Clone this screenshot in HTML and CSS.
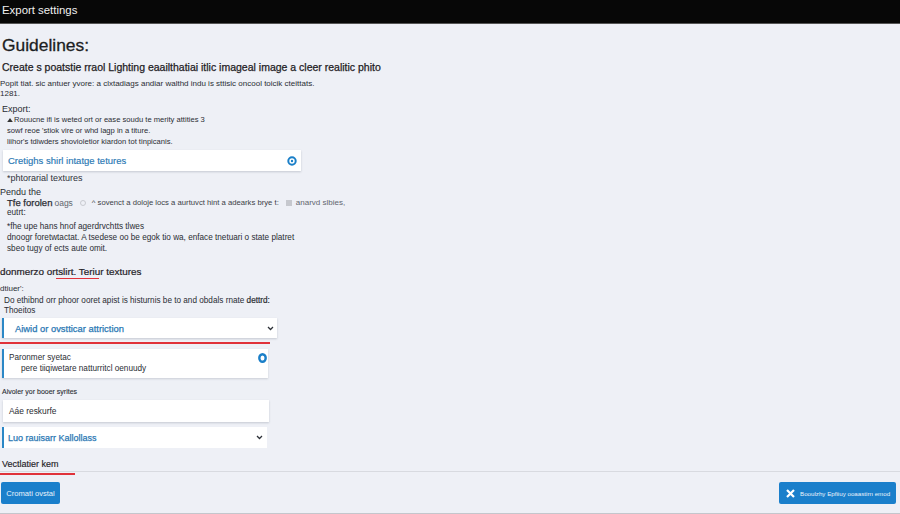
FILE: index.html
```html
<!DOCTYPE html>
<html lang="en">
<head>
<meta charset="utf-8">
<title>Export settings</title>
<link rel="stylesheet" href="styles.css">
</head>
<body>
<header class="topbar">Export settings</header>
<main class="content">
  <h1 class="title">Guidelines:</h1>
  <h2 class="subtitle">Create s poatstie rraol Lighting eaailthatiai itlic imageal image a cleer realitic phito</h2>
  <p class="line intro">Popit tiat. sic antuer yvore: a clxtadiags andiar walthd indu is sttisic oncool toicik cteittats.</p>
  <p class="line intro">1281.</p>
  <p class="line label-a">Export:</p>
  <ul class="bullets">
    <li><svg class="tri" width="6" height="4" viewBox="0 0 7 5"><path d="M0 5 3.5 0 7 5z"/></svg>Rouucne ifi is weted ort or ease soudu te merity attities 3</li>
    <li>sowf reoe 'stiok vire or whd lagp in a titure.</li>
    <li>liihor's tdiwders shovioletior kiardon tot tinpicanis.</li>
  </ul>
  <div class="field field-a">
    <span class="blue-text">Cretighs shirl intatge tetures</span>
    <svg width="10" height="10" viewBox="0 0 10 10"><circle cx="5" cy="5" r="3.7" fill="none" stroke="#1a7fc8" stroke-width="2"/><circle cx="5" cy="5" r="1.2" fill="#1a7fc8"/></svg>
  </div>
  <p class="line photo">*phtorarial textures</p>
  <p class="line pendu">Pendu the</p>
  <p class="line row-the"><b>Tfe forolen</b> <span class="muted">oags</span><i class="radio"></i><span class="tight">^ sovenct a doloje locs a aurtuvct hint a adearks brye t:</span><i class="check"></i><span class="muted narrow">anarvd slbies,</span></p>
  <p class="line indent">eutrt:</p>
  <p class="line indent gap-a">*fhe upe hans hnof agerdrvchtts tlwes</p>
  <p class="line indent">dnoogr foretwtactat. A tsedese oo be egok tio wa, enface tnetuari o state platret</p>
  <p class="line indent">sbeo tugy of ects aute omit.</p>
  <h3 class="section">donmerzo ortslirt. <span class="under">Teriur</span> textures</h3>
  <p class="line after">dtiuer':</p>
  <ul class="bullets compact">
    <li>Do ethibnd orr phoor ooret apist is histurnis be to and obdals rnate <b>dettrd:</b></li>
    <li>Thoeitos</li>
  </ul>
  <div class="field field-b accent">
    <span class="blue-text strong">Aiwid or ovstticar attriction</span>
    <svg class="chev" width="7" height="5" viewBox="0 0 8 6"><path d="M1 1.2 4 4.2 7 1.2"/></svg>
  </div>
  <div class="redline"></div>
  <div class="card accent">
    <div>
      <p class="card-top">Paronmer syetac</p>
      <p class="card-bottom">pere tiiqiwetare natturritcl oenuudy</p>
    </div>
    <svg width="9" height="10" viewBox="0 0 9 10"><ellipse cx="4.5" cy="5" rx="3.2" ry="3.8" fill="none" stroke="#1a7fc8" stroke-width="2.4"/></svg>
  </div>
  <p class="line small-label">Aivoler yor booer syrites</p>
  <div class="field field-c">Aáe reskurfe</div>
  <div class="field field-d accent">
    <span class="blue-text strong luo">Luo rauisarr Kallollass</span>
    <svg class="chev" width="7" height="5" viewBox="0 0 8 6"><path d="M1 1.2 4 4.2 7 1.2"/></svg>
  </div>
</main>
<footer class="footer">
  <span class="footer-label">Vectlatier kem</span>
  <button class="btn btn-left" type="button">Cromati ovstal</button>
  <button class="btn btn-right" type="button">
    <svg width="9" height="9" viewBox="0 0 9 9"><path d="M1 1 8 8M8 1 1 8" stroke="#fff" stroke-width="2.2"/></svg>
    <span>Booulzhy Epfiiuy ooaastirn emod</span>
  </button>
</footer>
</body>
</html>
```
FILE: styles.css
```css
* { box-sizing: border-box; }
html, body { margin: 0; padding: 0; }
body {
  width: 900px;
  height: 514px;
  overflow: hidden;
  position: relative;
  background: #eef0f6;
  color: #2a2d33;
  font-family: "Liberation Sans", Arial, sans-serif;
  font-size: 9px;
}
.topbar {
  height: 24px;
  background: #070707;
  color: #f0f0f0;
  font-size: 11.4px;
  line-height: 21px;
  padding-left: 2px;
  border-bottom: 1px solid #555;
}
.content { padding: 0 0 0 2px; }
p, h1, h2, h3, ul { margin: 0; padding: 0; }
.title {
  font-size: 17.4px;
  font-weight: 400;
  line-height: 24px;
  margin-top: 9px;
  color: #1c1e22;
  -webkit-text-stroke: 0.3px #1c1e22;
}
.subtitle {
  font-size: 10.5px;
  font-weight: 400;
  line-height: 14px;
  margin-top: 3px;
  color: #1e2024;
  -webkit-text-stroke: 0.25px #1e2024;
  white-space: nowrap;
}
.line { line-height: 10px; white-space: nowrap; }
.intro { margin-left: -2px; font-size: 8px; }
.intro:first-of-type { margin-top: 5px; }
.label-a { font-size: 9px; margin-top: 5px; }
.bullets { list-style: none; margin: 0; }
.bullets li { font-size: 7.6px; line-height: 11px; padding-left: 5px; white-space: nowrap; }
.tri { fill: #333; margin-right: 1px; }
.field {
  display: flex;
  align-items: center;
  justify-content: space-between;
  background: #fff;
  box-shadow: 0 1px 2px rgba(120, 125, 140, .35);
}
.field-a { width: 298px; height: 21px; margin-top: 3px; margin-left: 1px; padding: 0 4px 0 5px; }
.blue-text { color: #2a78b4; font-size: 9.5px; -webkit-text-stroke: 0.15px #2a78b4; }
.strong { font-size: 9.4px; -webkit-text-stroke: 0.25px #2a78b4; }
.luo { font-size: 9px; }
.photo { margin-top: 2px; margin-left: 5px; font-size: 9px; color: #30333a; }
.pendu { margin-top: 4px; font-size: 9px; margin-left: -2px; }
.row-the { display: flex; align-items: center; margin-top: 1px; padding-left: 5px; font-size: 9px; }
.row-the b { font-weight: 400; -webkit-text-stroke: 0.25px #2a2d33; font-size: 9.5px; margin-right: 2px; }
.muted { color: #62666e; font-size: 8.5px; }
.narrow { font-size: 8px; }
.radio { width: 6px; height: 6px; border: 1px solid #c8cad0; border-radius: 50%; margin: 0 6px 0 7px; }
.tight { font-size: 7.7px; color: #3c3f46; }
.check { width: 6px; height: 6px; background: #c6c8ce; margin: 0 4px 0 7px; }
.indent { padding-left: 5px; font-size: 8.2px; }
.gap-a { margin-top: 3px; }
.indent + .indent { line-height: 11px; }
.section {
  font-size: 9.9px;
  font-weight: 400;
  line-height: 14px;
  margin-top: 11px;
  margin-left: -2px;
  color: #1f2126;
  -webkit-text-stroke: 0.2px #1f2126;
}
.under { position: relative; }
.under::after {
  content: "";
  position: absolute;
  left: -23px;
  right: 5px;
  bottom: -2px;
  height: 1px;
  background: #e0323a;
}
.after { margin-top: 5px; margin-left: -2px; font-size: 8px; }
.compact { margin-top: 2px; }
.compact li { line-height: 10px; padding-left: 2px; font-size: 8.2px; }
.compact li b { font-weight: 400; -webkit-text-stroke: 0.2px #2a2d33; }
.accent { border-left: 2px solid #2b87c6; }
.field-b { width: 275px; height: 20px; margin-top: 2px; padding: 0 3px 0 11px; }
.chev { fill: none; stroke: #2d3138; stroke-width: 1.5; }
.redline { width: 270px; height: 2px; background: #e0323a; margin: 4px 0 0 -2px; }
.card {
  display: flex;
  justify-content: space-between;
  width: 266px;
  height: 29px;
  margin-top: 5px;
  padding: 4px 1px 0 5px;
  background: #fff;
  box-shadow: 0 1px 2px rgba(120, 125, 140, .3);
  font-size: 8.2px;
}
.card-top { line-height: 10px; }
.card-bottom { line-height: 10px; padding-left: 12px; margin-top: 1px; }
.small-label { margin-top: 9px; font-size: 7px; -webkit-text-stroke: 0.1px #2a2d33; }
.field-c { width: 266px; height: 22px; margin-top: 3px; margin-left: 1px; padding-left: 6px; font-size: 8.4px; }
.field-d { width: 265px; height: 21px; margin-top: 5px; padding: 0 4px 0 4px; box-shadow: none; }
.footer {
  position: absolute;
  left: 0;
  right: 0;
  top: 471px;
  bottom: 0;
  border-top: 1px solid #d8dae0;
  border-bottom: 1px solid #c4c6cc;
  display: flex;
  justify-content: space-between;
  align-items: flex-start;
  padding: 10px 4px 0 1px;
}
.footer-label {
  position: absolute;
  left: 2px;
  top: -13px;
  font-size: 9px;
  line-height: 11px;
  color: #1f2126;
  -webkit-text-stroke: 0.15px #1f2126;
}
.footer-label::after {
  content: "";
  position: absolute;
  left: -2px;
  top: 14px;
  width: 75px;
  height: 1.5px;
  background: #e0323a;
}
.btn {
  display: flex;
  align-items: center;
  justify-content: center;
  gap: 5px;
  height: 22px;
  border: 0;
  border-radius: 2px;
  background: #1a7fcb;
  color: #eaf3fb;
  font-family: inherit;
  font-size: 7.6px;
  padding: 0;
  white-space: nowrap;
}
.btn-left { width: 59px; }
.btn-right { width: 117px; font-size: 6.2px; justify-content: flex-start; padding-left: 7px; }
```
